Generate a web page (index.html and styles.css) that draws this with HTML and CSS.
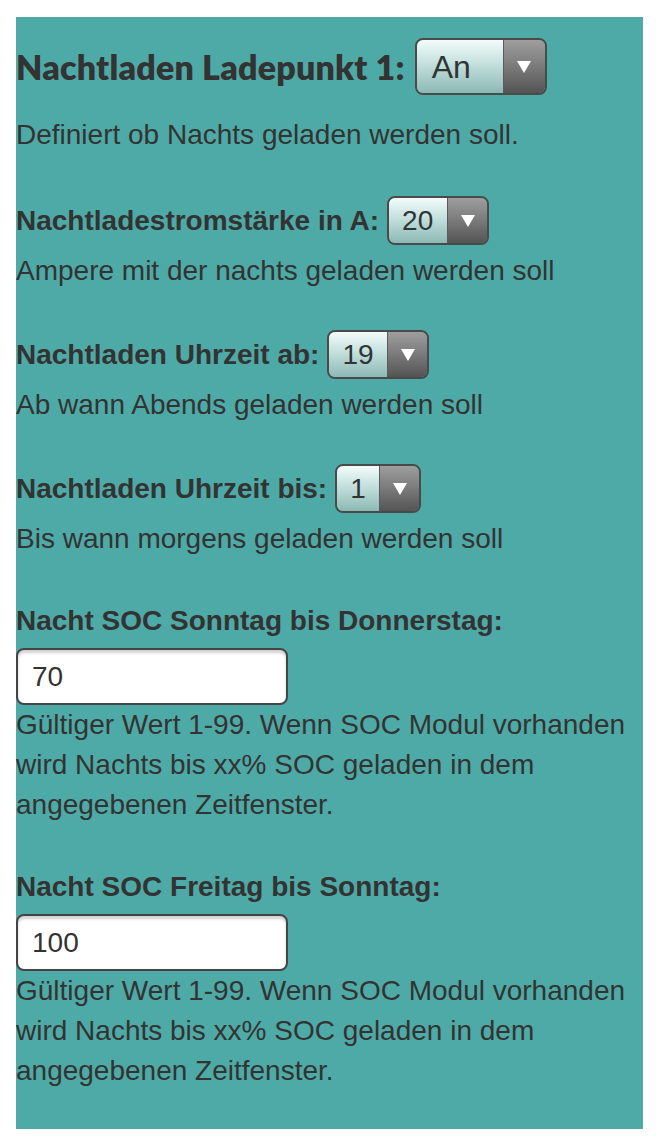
FILE: index.html
```html
<!DOCTYPE html>
<html lang="de">
<head>
<meta charset="utf-8">
<title>Nachtladen</title>
<link rel="stylesheet" href="styles.css">
</head>
<body>
<div class="panel">
  <div class="row row-head">
    <span class="heading">Nachtladen Ladepunkt 1:</span>
    <div class="sel sel-big"><span class="sel-val">An</span><span class="sel-arrow"><span class="tri"></span></span></div>
  </div>
  <p class="desc desc-first">Definiert ob Nachts geladen werden soll.</p>

  <div class="row row-label row-label-first">
    <span class="label">Nachtladestromstärke in A:</span>
    <div class="sel sel-2"><span class="sel-val">20</span><span class="sel-arrow"><span class="tri"></span></span></div>
  </div>
  <p class="desc desc-after-sel">Ampere mit der nachts geladen werden soll</p>

  <div class="row row-label">
    <span class="label">Nachtladen Uhrzeit ab:</span>
    <div class="sel sel-2"><span class="sel-val">19</span><span class="sel-arrow"><span class="tri"></span></span></div>
  </div>
  <p class="desc desc-after-sel">Ab wann Abends geladen werden soll</p>

  <div class="row row-label">
    <span class="label">Nachtladen Uhrzeit bis:</span>
    <div class="sel sel-1"><span class="sel-val">1</span><span class="sel-arrow"><span class="tri"></span></span></div>
  </div>
  <p class="desc desc-after-sel">Bis wann morgens geladen werden soll</p>

  <div class="field">
    <div class="label label-block">Nacht SOC Sonntag bis Donnerstag:</div>
    <div class="input">70</div>
    <p class="desc">Gültiger Wert 1-99. Wenn SOC Modul vorhanden wird Nachts bis xx% SOC geladen in dem angegebenen Zeitfenster.</p>
  </div>

  <div class="field">
    <div class="label label-block">Nacht SOC Freitag bis Sonntag:</div>
    <div class="input">100</div>
    <p class="desc">Gültiger Wert 1-99. Wenn SOC Modul vorhanden wird Nachts bis xx% SOC geladen in dem angegebenen Zeitfenster.</p>
  </div>
</div>
</body>
</html>
```
FILE: styles.css
```css
html, body {
  margin: 0;
  padding: 0;
  background: #ffffff;
}
body {
  font-family: "Liberation Sans", Arial, Helvetica, sans-serif;
  font-size: 28px;
  line-height: 40px;
  color: #333333;
}
.panel {
  margin: 17px 13px 17px 16px;
  background: #4eaaa6;
  padding: 21px 0 39px 0;
  height: 1112px;
  box-sizing: border-box;
}
.row {
  display: flex;
  align-items: center;
}
.row-head {
  gap: 10px;
  height: 57px;
}
.heading {
  font-family: Lato, "Noto Sans", sans-serif;
  font-weight: 800;
  font-size: 34px;
  letter-spacing: 0.2px;
}
.row-label {
  gap: 8px;
  height: 49px;
  margin-top: 39px;
}
.row-label-first {
  margin-top: 41px;
}
.label {
  font-weight: 700;
}
.desc {
  margin: 0;
}
.desc-first {
  margin-top: 20px;
}
.desc-after-sel {
  margin-top: 6px;
}
.sel {
  display: flex;
  box-sizing: border-box;
  border: 2px solid #4a4a4a;
  border-radius: 8px;
  overflow: hidden;
  height: 49px;
}
.sel-val {
  flex: 1;
  display: flex;
  align-items: center;
  padding-left: 13px;
  background: linear-gradient(to bottom, #f2fcfa 0%, #c9e3e0 40%, #8cb9b5 100%);
  color: #2f3535;
}
.sel-arrow {
  width: 39px;
  display: flex;
  align-items: center;
  justify-content: center;
  background: linear-gradient(to bottom, #9e9e9e 0%, #7a7a7a 50%, #545454 100%);
  border-left: 1px solid #5a5a5a;
}
.tri {
  width: 0;
  height: 0;
  border-left: 7px solid transparent;
  border-right: 7px solid transparent;
  border-top: 12px solid #ffffff;
}
.sel-big {
  width: 132px;
  height: 57px;
  font-size: 32px;
}
.sel-big .sel-val {
  padding-left: 15px;
}
.sel-big .sel-arrow {
  width: 41px;
}
.sel-2 {
  width: 102px;
}
.sel-1 {
  width: 86px;
}
.field {
  margin-top: 42px;
}
.label-block {
  height: 40px;
}
.input {
  box-sizing: border-box;
  width: 272px;
  height: 57px;
  margin-top: 7px;
  border: 2px solid #444444;
  border-radius: 8px;
  background: #ffffff;
  box-shadow: inset 0 3px 3px rgba(0, 0, 0, 0.18);
  padding-left: 14px;
  display: flex;
  align-items: center;
  color: #333333;
}
```
